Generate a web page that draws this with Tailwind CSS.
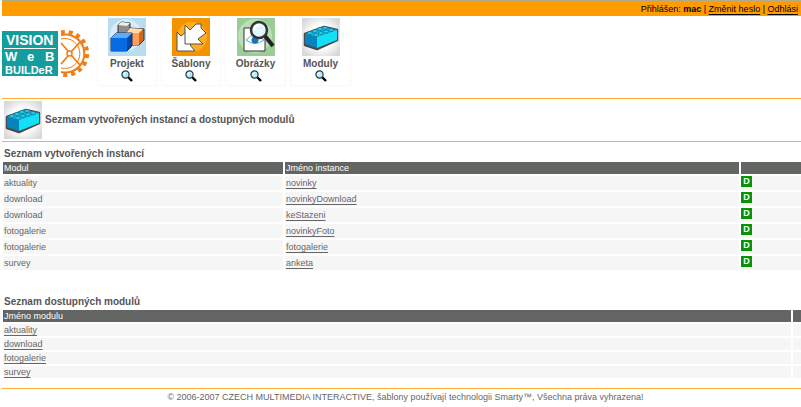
<!DOCTYPE html>
<html lang="cs">
  <head>
    <meta charset="UTF-8" />
    <meta name="viewport" content="width=device-width, initial-scale=1.0" />
    <script src="https://cdn.jsdelivr.net/npm/@tailwindcss/browser@4"></script>
    <title>Vision Web Builder</title>
  </head>
  <body class="bg-white overflow-x-hidden font-['Liberation_Sans',Arial,sans-serif] text-[9px] leading-3 text-[#666666]">
    <!-- shared icons -->
    <svg class="absolute size-0">
      <defs>
        <radialGradient id="glow">
          <stop offset="0.5" stop-color="#ffffff" />
          <stop offset="1" stop-color="#d9d9d9" />
        </radialGradient>
        <symbol id="brick" viewBox="0 0 38 38">
          <rect width="38" height="38" fill="#d9d9d9" />
          <circle cx="19" cy="19" r="23" fill="url(#glow)" />
          <path d="M3 16 22 9 35 12 35 22 15 31 3 27z" fill="#4a4a4a" stroke="#4a4a4a" stroke-width="2.500" stroke-linejoin="round" />
          <path d="M3 16 21 9 35 12 15 19z" fill="#19bfe4" />
          <path d="M3 16 15 19 15 30 3 26z" fill="#0684bd" />
          <path d="M15 19 35 12 35 22 15 30z" fill="#13e0f8" />
          <g fill="#2fd0ee" stroke="#087aa0" stroke-width="0.800">
            <ellipse cx="18" cy="11" rx="2.500" ry="1.500" />
            <ellipse cx="23" cy="10" rx="2.500" ry="1.500" />
            <ellipse cx="13" cy="13" rx="2.500" ry="1.500" />
            <ellipse cx="8" cy="15" rx="2.500" ry="1.500" />
            <ellipse cx="29" cy="12" rx="2.500" ry="1.500" />
            <ellipse cx="24" cy="13.500" rx="2.500" ry="1.500" />
            <ellipse cx="19" cy="15" rx="2.500" ry="1.500" />
            <ellipse cx="14" cy="17" rx="2.500" ry="1.500" />
          </g>
        </symbol>
        <symbol id="lens" viewBox="0 0 12 12">
          <path d="M7 7 11 11" stroke="#000000" stroke-width="2.400" />
          <circle cx="4.500" cy="4.500" r="3.600" fill="#b5ecf5" stroke="#263944" stroke-width="1.200" />
          <path d="M2.500 4.500 4.500 2.500" stroke="#ffffff" stroke-width="1.200" />
        </symbol>
      </defs>
    </svg>

    <!-- user bar -->
    <div class="h-4 ml-[2px] pr-[3px] border-t border-[#b5a98c] bg-[#ff9c00] flex items-center justify-end whitespace-nowrap text-black">
      <p>Přihlášen: <b>mac</b> | <a href="#" class="underline underline-offset-2">Změnit heslo</a> | <a href="#" class="underline underline-offset-2">Odhlási</a></p>
    </div>

    <!-- logo and main menu -->
    <header class="flex h-[82px] pl-[2px]">
      <a href="#" class="w-[95px] pt-3" aria-label="Vision Web Builder">
        <svg class="w-[92px] h-[50px]" viewBox="0 0 92 50">
          <rect y="3" width="56" height="45" fill="#159d9e" />
          <path d="M2 20.500H54" stroke="#ffffff" />
          <g fill="#ffffff" font-family="Liberation Sans" font-weight="bold">
            <text x="4" y="17" font-size="14">VISION</text>
            <text x="3" y="33" font-size="13">W</text>
            <text x="25" y="33" font-size="13">e</text>
            <text x="43" y="33" font-size="13">B</text>
            <text x="3" y="46" font-size="11">BUILDeR</text>
          </g>
          <g fill="none" stroke="#f07d16">
            <path d="M59 7A19 19 0 1 1 59 44" stroke-width="2" />
            <path d="M59 4.500A21.500 21.500 0 1 1 59 46.500" stroke-width="4" stroke-dasharray="4 3.800" />
            <path d="M59 11A15 15 0 1 1 59 40" stroke-width="1" />
            <path d="M59 15 66 23M69 27 78 37M59 36 66 28M69 24 78 14" stroke-width="1.800" />
            <circle cx="67.500" cy="25.500" r="2.500" fill="#ffffff" stroke-width="1.500" />
          </g>
        </svg>
      </a>
      <nav class="flex gap-1 h-[70px] text-[10px] font-bold text-[#555555]">
        <a href="#" class="w-[60px] pt-[2px] flex flex-col items-center border border-t-0 border-[#f8f8f8]">
          <svg class="size-[38px]" viewBox="0 0 38 38">
            <rect width="38" height="38" fill="#b9dcef" />
            <circle cx="18" cy="17" r="16" fill="#d8edf7" />
            <path d="M10 7 13 4 22 5 22 20 10 20z" fill="#8e8e8e" stroke="#333333" />
            <path d="M10 7 13 4 22 5 19 8z" fill="#eeeeee" />
            <path d="M18 15 22 10 36 11 36 22 31 27 18 27z" fill="#c96a20" stroke="#333333" />
            <path d="M18 15H31V27H18z" fill="#ff9d5c" />
            <path d="M18 15 22 10 35 11 31 15z" fill="#ffdcae" />
            <path d="M3 20 8 15 24 15 24 28 19 33 3 33z" fill="#0647a3" stroke="#12315d" />
            <path d="M3 20H19V33H3z" fill="#086be0" />
            <path d="M3 20 8 15 24 15 19 20z" fill="#5baeff" />
          </svg>
          <span class="mt-px h-[13px] leading-[13px]">Projekt</span>
          <svg class="size-3"><use href="#lens" /></svg>
        </a>
        <a href="#" class="w-[60px] pt-[2px] flex flex-col items-center border border-t-0 border-[#f8f8f8]">
          <svg class="size-[38px]" viewBox="0 0 38 38">
            <rect width="38" height="38" fill="#f59200" />
            <circle cx="20" cy="19" r="15" fill="#ffae22" />
            <g fill="#ffffff" stroke="#55504a" stroke-linejoin="round">
              <path d="M5 14 9 18 14 14 22 22 18 27 23 33H5z" />
              <path d="M13 7 18 12 24 6 29 6 29 10 34 15 26 21 31 26H13z" />
            </g>
          </svg>
          <span class="mt-px h-[13px] leading-[13px]">Šablony</span>
          <svg class="size-3"><use href="#lens" /></svg>
        </a>
        <a href="#" class="w-[61px] pt-[2px] flex flex-col items-center border border-t-0 border-[#f8f8f8]">
          <svg class="size-[38px]" viewBox="0 0 38 38">
            <rect width="38" height="38" fill="#9bcc96" />
            <circle cx="18" cy="18" r="17" fill="#b9dfb5" />
            <path d="M7 10H28V33H7z" fill="#ffffff" stroke="#333333" />
            <path d="M9 22Q18 12 27 22Q18 29 9 22z" fill="#ffffff" stroke="#5aa0cc" />
            <circle cx="18" cy="22" r="3.500" fill="#1974ae" />
            <path d="M28 18 36 28" stroke="#222222" stroke-width="4" />
            <circle cx="22" cy="12" r="8" fill="#e1f5fa" stroke="#333333" stroke-width="2.500" />
            <path d="M17 12Q18 7 23 7" fill="none" stroke="#ffffff" stroke-width="2" />
          </svg>
          <span class="mt-px h-[13px] leading-[13px]">Obrázky</span>
          <svg class="size-3"><use href="#lens" /></svg>
        </a>
        <a href="#" class="w-[61px] pt-[2px] flex flex-col items-center border border-t-0 border-[#f8f8f8]">
          <svg class="size-[38px]"><use href="#brick" /></svg>
          <span class="mt-px h-[13px] leading-[13px]">Moduly</span>
          <svg class="size-3"><use href="#lens" /></svg>
        </a>
      </nav>
    </header>

    <!-- page title -->
    <div class="ml-[2px] h-11 pl-[2px] flex items-center gap-[3px] border-y border-[#ffad33]">
      <svg class="size-[38px]"><use href="#brick" /></svg>
      <h1 class="text-[10px] font-bold text-[#555555]">Sezmam vytvořených instancí a dostupných modulů</h1>
    </div>

    <main class="pl-px">
      <!-- instances -->
      <section class="pt-1.5">
        <h2 class="pl-[3px] text-[10px] font-bold text-[#555555]">Seznam vytvořených instancí</h2>
        <table class="w-[calc(100%+2px)] table-fixed border-separate border-spacing-[2px]">
          <thead class="bg-[#636562] text-left text-white">
            <tr>
              <th class="w-[280px] p-0 pl-px font-normal">Modul</th>
              <th class="p-0 pl-px font-normal">Jméno instance</th>
              <th class="w-[60px] p-0"></th>
            </tr>
          </thead>
          <tbody class="bg-[#f6f6f6]">
            <tr class="h-3.5">
              <td class="p-0 pl-px">aktuality</td>
              <td class="p-0 pl-px"><a href="#" class="underline underline-offset-2">novinky</a></td>
              <td class="p-0 align-top"><a href="#" class="block w-[11px] h-[11px] bg-[#079307] text-center leading-[11px] font-bold text-white">D</a></td>
            </tr>
            <tr class="h-3.5">
              <td class="p-0 pl-px">download</td>
              <td class="p-0 pl-px"><a href="#" class="underline underline-offset-2">novinkyDownload</a></td>
              <td class="p-0 align-top"><a href="#" class="block w-[11px] h-[11px] bg-[#079307] text-center leading-[11px] font-bold text-white">D</a></td>
            </tr>
            <tr class="h-3.5">
              <td class="p-0 pl-px">download</td>
              <td class="p-0 pl-px"><a href="#" class="underline underline-offset-2">keStazeni</a></td>
              <td class="p-0 align-top"><a href="#" class="block w-[11px] h-[11px] bg-[#079307] text-center leading-[11px] font-bold text-white">D</a></td>
            </tr>
            <tr class="h-3.5">
              <td class="p-0 pl-px">fotogalerie</td>
              <td class="p-0 pl-px"><a href="#" class="underline underline-offset-2">novinkyFoto</a></td>
              <td class="p-0 align-top"><a href="#" class="block w-[11px] h-[11px] bg-[#079307] text-center leading-[11px] font-bold text-white">D</a></td>
            </tr>
            <tr class="h-3.5">
              <td class="p-0 pl-px">fotogalerie</td>
              <td class="p-0 pl-px"><a href="#" class="underline underline-offset-2">fotogalerie</a></td>
              <td class="p-0 align-top"><a href="#" class="block w-[11px] h-[11px] bg-[#079307] text-center leading-[11px] font-bold text-white">D</a></td>
            </tr>
            <tr class="h-3.5">
              <td class="p-0 pl-px">survey</td>
              <td class="p-0 pl-px"><a href="#" class="underline underline-offset-2">anketa</a></td>
              <td class="p-0 align-top"><a href="#" class="block w-[11px] h-[11px] bg-[#079307] text-center leading-[11px] font-bold text-white">D</a></td>
            </tr>
          </tbody>
        </table>
      </section>

      <!-- available modules -->
      <section class="pt-6">
        <h2 class="pl-[3px] text-[10px] font-bold text-[#555555]">Seznam dostupných modulů</h2>
        <table class="w-[calc(100%+2px)] table-fixed border-separate border-spacing-[2px]">
          <thead class="bg-[#636562] text-left text-white">
            <tr>
              <th class="p-0 pl-px font-normal">Jméno modulu</th>
              <th class="w-2 p-0"></th>
            </tr>
          </thead>
          <tbody class="bg-[#f6f6f6]">
            <tr>
              <td class="p-0 pl-px"><a href="#" class="underline underline-offset-2">aktuality</a></td>
              <td class="p-0"></td>
            </tr>
            <tr>
              <td class="p-0 pl-px"><a href="#" class="underline underline-offset-2">download</a></td>
              <td class="p-0"></td>
            </tr>
            <tr>
              <td class="p-0 pl-px"><a href="#" class="underline underline-offset-2">fotogalerie</a></td>
              <td class="p-0"></td>
            </tr>
            <tr>
              <td class="p-0 pl-px"><a href="#" class="underline underline-offset-2">survey</a></td>
              <td class="p-0"></td>
            </tr>
          </tbody>
        </table>
      </section>
    </main>

    <footer class="ml-[2px] mt-2 pt-[2px] pl-2 border-t border-[#ffad33] text-center">
      © 2006-2007 CZECH MULTIMEDIA INTERACTIVE, šablony používají technologii Smarty™, Všechna práva vyhrazena!
    </footer>
  </body>
</html>
